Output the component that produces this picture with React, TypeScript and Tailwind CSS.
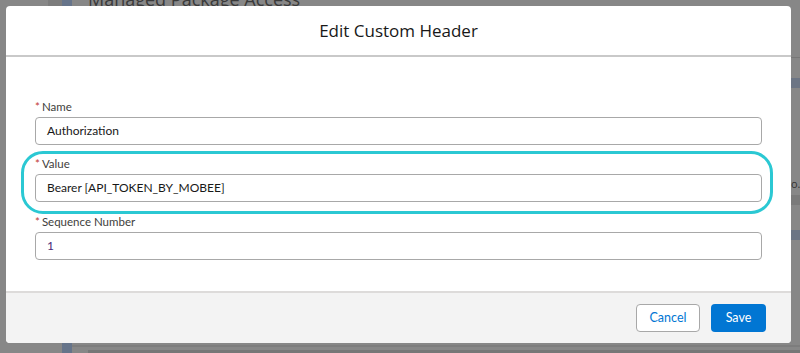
const font = { fontFamily: '"Open Sans", "Noto Sans", Arial, sans-serif' };
const bodyFont = { fontFamily: 'Lato, "Open Sans", Arial, sans-serif' };

function Field({ label, value, valueClass }: { label: string; value: string; valueClass?: string }) {
  return (
    <div className="flex flex-col gap-[2px]" style={bodyFont}>
      <label className="flex h-4 items-center text-[11.5px] leading-4 text-[#3e3e3c]">
        <span className="mr-[2px] text-[#c23934]">*</span>
        {label}
      </label>
      <div className="flex h-[28px] items-center rounded-[4px] border border-[#a8a8a8] bg-white px-[11px]">
        <span className={`text-[12px] ${valueClass ?? 'text-[#181818]'}`}>{value}</span>
      </div>
    </div>
  );
}

export default function App() {
  return (
    <div className="relative h-[353px] w-[800px] overflow-hidden bg-[#878787]" style={font}>
      {/* faded page behind the modal */}
      <div className="flex h-full flex-col">
        <div className="flex h-[6px] items-end gap-0">
          <div className="ml-[48px] h-[10px] w-[14px] bg-[#7c7c7c]" />
          <div className="h-[10px] w-[10px] bg-[#66748a]" />
          <span className="ml-[16px] -mb-[2px] text-[18px] leading-[18px] text-[#3a3a3a]">Managed Package Access</span>
        </div>
        <div className="flex flex-1 flex-col items-end">
          <div className="mt-[51px] h-[1px] w-[9px] bg-[#777]" />
          <div className="mt-[20px] h-[10px] w-[9px] bg-[#6c7584]" />
          <div className="mt-[90px] flex h-[12px] w-[9px] items-center overflow-hidden text-[11px] text-[#333]">o.c</div>
          <div className="mt-[5px] h-[10px] w-[9px] bg-[#7a7a7a]" />
          <div className="mt-[25px] h-[10px] w-[9px] bg-[#6c7584]" />
        </div>
        <div className="flex h-[10px] items-start">
          <div className="ml-[62px] h-[10px] w-[10px] bg-[#66748a]" />
          <div className="flex flex-1 flex-col">
            <div className="mt-[2px] h-[2px] bg-[#7d7d7d]" />
            <div className="ml-[16px] mt-[3px] h-[3px] bg-[#777]" />
          </div>
        </div>
      </div>

      {/* modal */}
      <div className="absolute left-[6px] top-[6px] flex h-[337px] w-[785px] flex-col overflow-hidden rounded-[4px] bg-white">
        <div className="flex h-[51px] items-center justify-center border-b-2 border-[#c9c9c9]">
          <h2 className="text-[17px] text-[#181818]">Edit Custom Header</h2>
        </div>
        <div className="flex flex-1 flex-col gap-[10px] px-[29px] pt-[42px]">
          <Field label="Name" value="Authorization" />
          <div className="relative mt-[1px]">
            <div className="pointer-events-none absolute -bottom-[12px] -left-[14px] -right-[11px] -top-[5px] rounded-[22px] border-[3px] border-[#2bc8d3]" />
            <Field label="Value" value="Bearer [API_TOKEN_BY_MOBEE]" />
          </div>
          <div className="mt-[2px]">
            <Field label="Sequence Number" value="1" valueClass="text-[#4a2a7a]" />
          </div>
        </div>
        <div
          className="flex h-[52px] items-start justify-end gap-[11px] border-t-2 border-[#dddbda] bg-[#f3f3f3] pr-[25px] pt-[11px]"
          style={bodyFont}
        >
          <button className="h-[28px] w-[64px] rounded-[4px] border border-[#a8a8a8] bg-white text-[12.5px] text-[#0176d3]">
            Cancel
          </button>
          <button className="h-[28px] w-[55px] rounded-[4px] bg-[#0176d3] text-[12.5px] text-white">Save</button>
        </div>
      </div>
    </div>
  );
}
